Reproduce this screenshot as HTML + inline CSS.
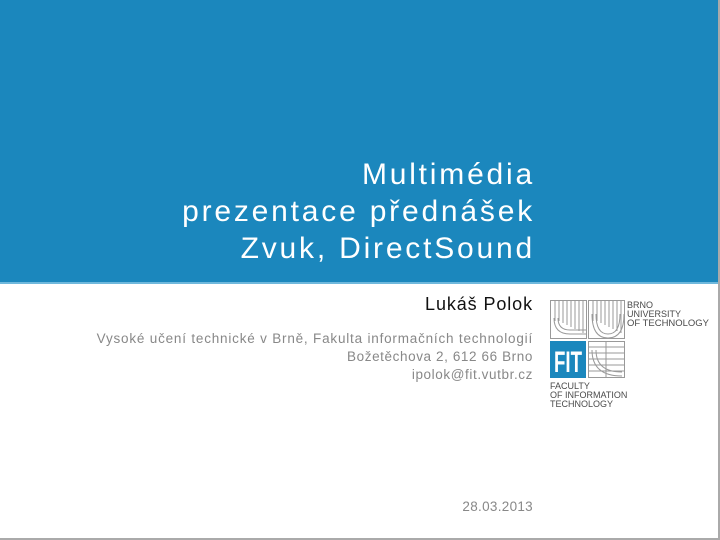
<!DOCTYPE html>
<html><head><meta charset="utf-8"><style>
body{margin:0;width:720px;height:540px;position:relative;background:#fff;font-family:"Liberation Sans",sans-serif;overflow:hidden}
.band{position:absolute;left:0;top:0;width:720px;height:282px;background:#1b87bd;border-bottom:2px solid #6fb8dc}
.t{position:absolute;right:185px;color:#fff;font-size:30px;white-space:nowrap;text-align:right;letter-spacing:2.8px}
.r{position:absolute;right:187px;white-space:nowrap;color:#888;font-size:13.5px;letter-spacing:0.8px}
.bd{position:absolute;right:0;top:0;width:2px;height:540px;background:#aaa}
.bb{position:absolute;left:0;bottom:0;width:720px;height:2px;background:#aaa}
</style></head><body>
<div class="band"></div>
<div class="t" style="top:158px">Multimédia</div>
<div class="t" style="top:195px">prezentace přednášek</div>
<div class="t" style="top:232px">Zvuk, DirectSound</div>
<div class="r" style="top:294px;color:#111;font-size:18px;letter-spacing:0.9px">Lukáš Polok</div>
<div class="r" style="top:331px">Vysoké učení technické v Brně, Fakulta informačních technologií</div>
<div class="r" style="top:349px;letter-spacing:0.6px">Božetěchova 2, 612 66 Brno</div>
<div class="r" style="top:367px;letter-spacing:0.6px">ipolok@fit.vutbr.cz</div>
<div class="r" style="top:499px;letter-spacing:0.3px">28.03.2013</div>
<svg style="position:absolute;left:550px;top:300px" width="170" height="112" viewBox="0 0 170 112">
<g fill="none" stroke="#999" stroke-width="1">
<rect x="0.5" y="0.5" width="36" height="38"/><rect x="38.5" y="0.5" width="36" height="38"/>
<path d="M5 1v20M9 1v20M13 1v22M17 1v24M21 1v26M25 1v28M29 1v30M33 1v32"/>
<path d="M43 1v20M47 1v20M51 1v22M55 1v24M59 1v26M63 1v28M67 1v30M71 1v32"/>
<path d="M4 18q0 16 16 16h16M8 18q0 12 12 12h16M42 14q0 24 16 24t16-24M46 14q0 20 12 20t12-20"/>
<rect x="38.5" y="41.5" width="36" height="36"/>
<path d="M39 47h36M39 53h36M39 59h36M39 65h36M39 71h36M56 42v36"/>
<path d="M42 50q0 26 30 26M46 50q0 22 26 22"/>
</g>
<rect x="0" y="41" width="36" height="37" fill="#1b87bd"/>
<text x="18" y="72" fill="#fff" font-size="30" font-weight="bold" text-anchor="middle" font-family="Liberation Sans Narrow,Liberation Sans,sans-serif" textLength="28" lengthAdjust="spacingAndGlyphs">FIT</text>
<g fill="#4a4a4a" font-size="9" font-family="Liberation Sans,sans-serif">
<text x="77" y="8">BRNO</text><text x="77" y="17">UNIVERSITY</text><text x="77" y="26" textLength="82" lengthAdjust="spacingAndGlyphs">OF TECHNOLOGY</text>
<text x="0" y="89">FACULTY</text><text x="0" y="98">OF INFORMATION</text><text x="0" y="107">TECHNOLOGY</text>
</g></svg>
<div class="bd"></div><div class="bb"></div>
</body></html>
